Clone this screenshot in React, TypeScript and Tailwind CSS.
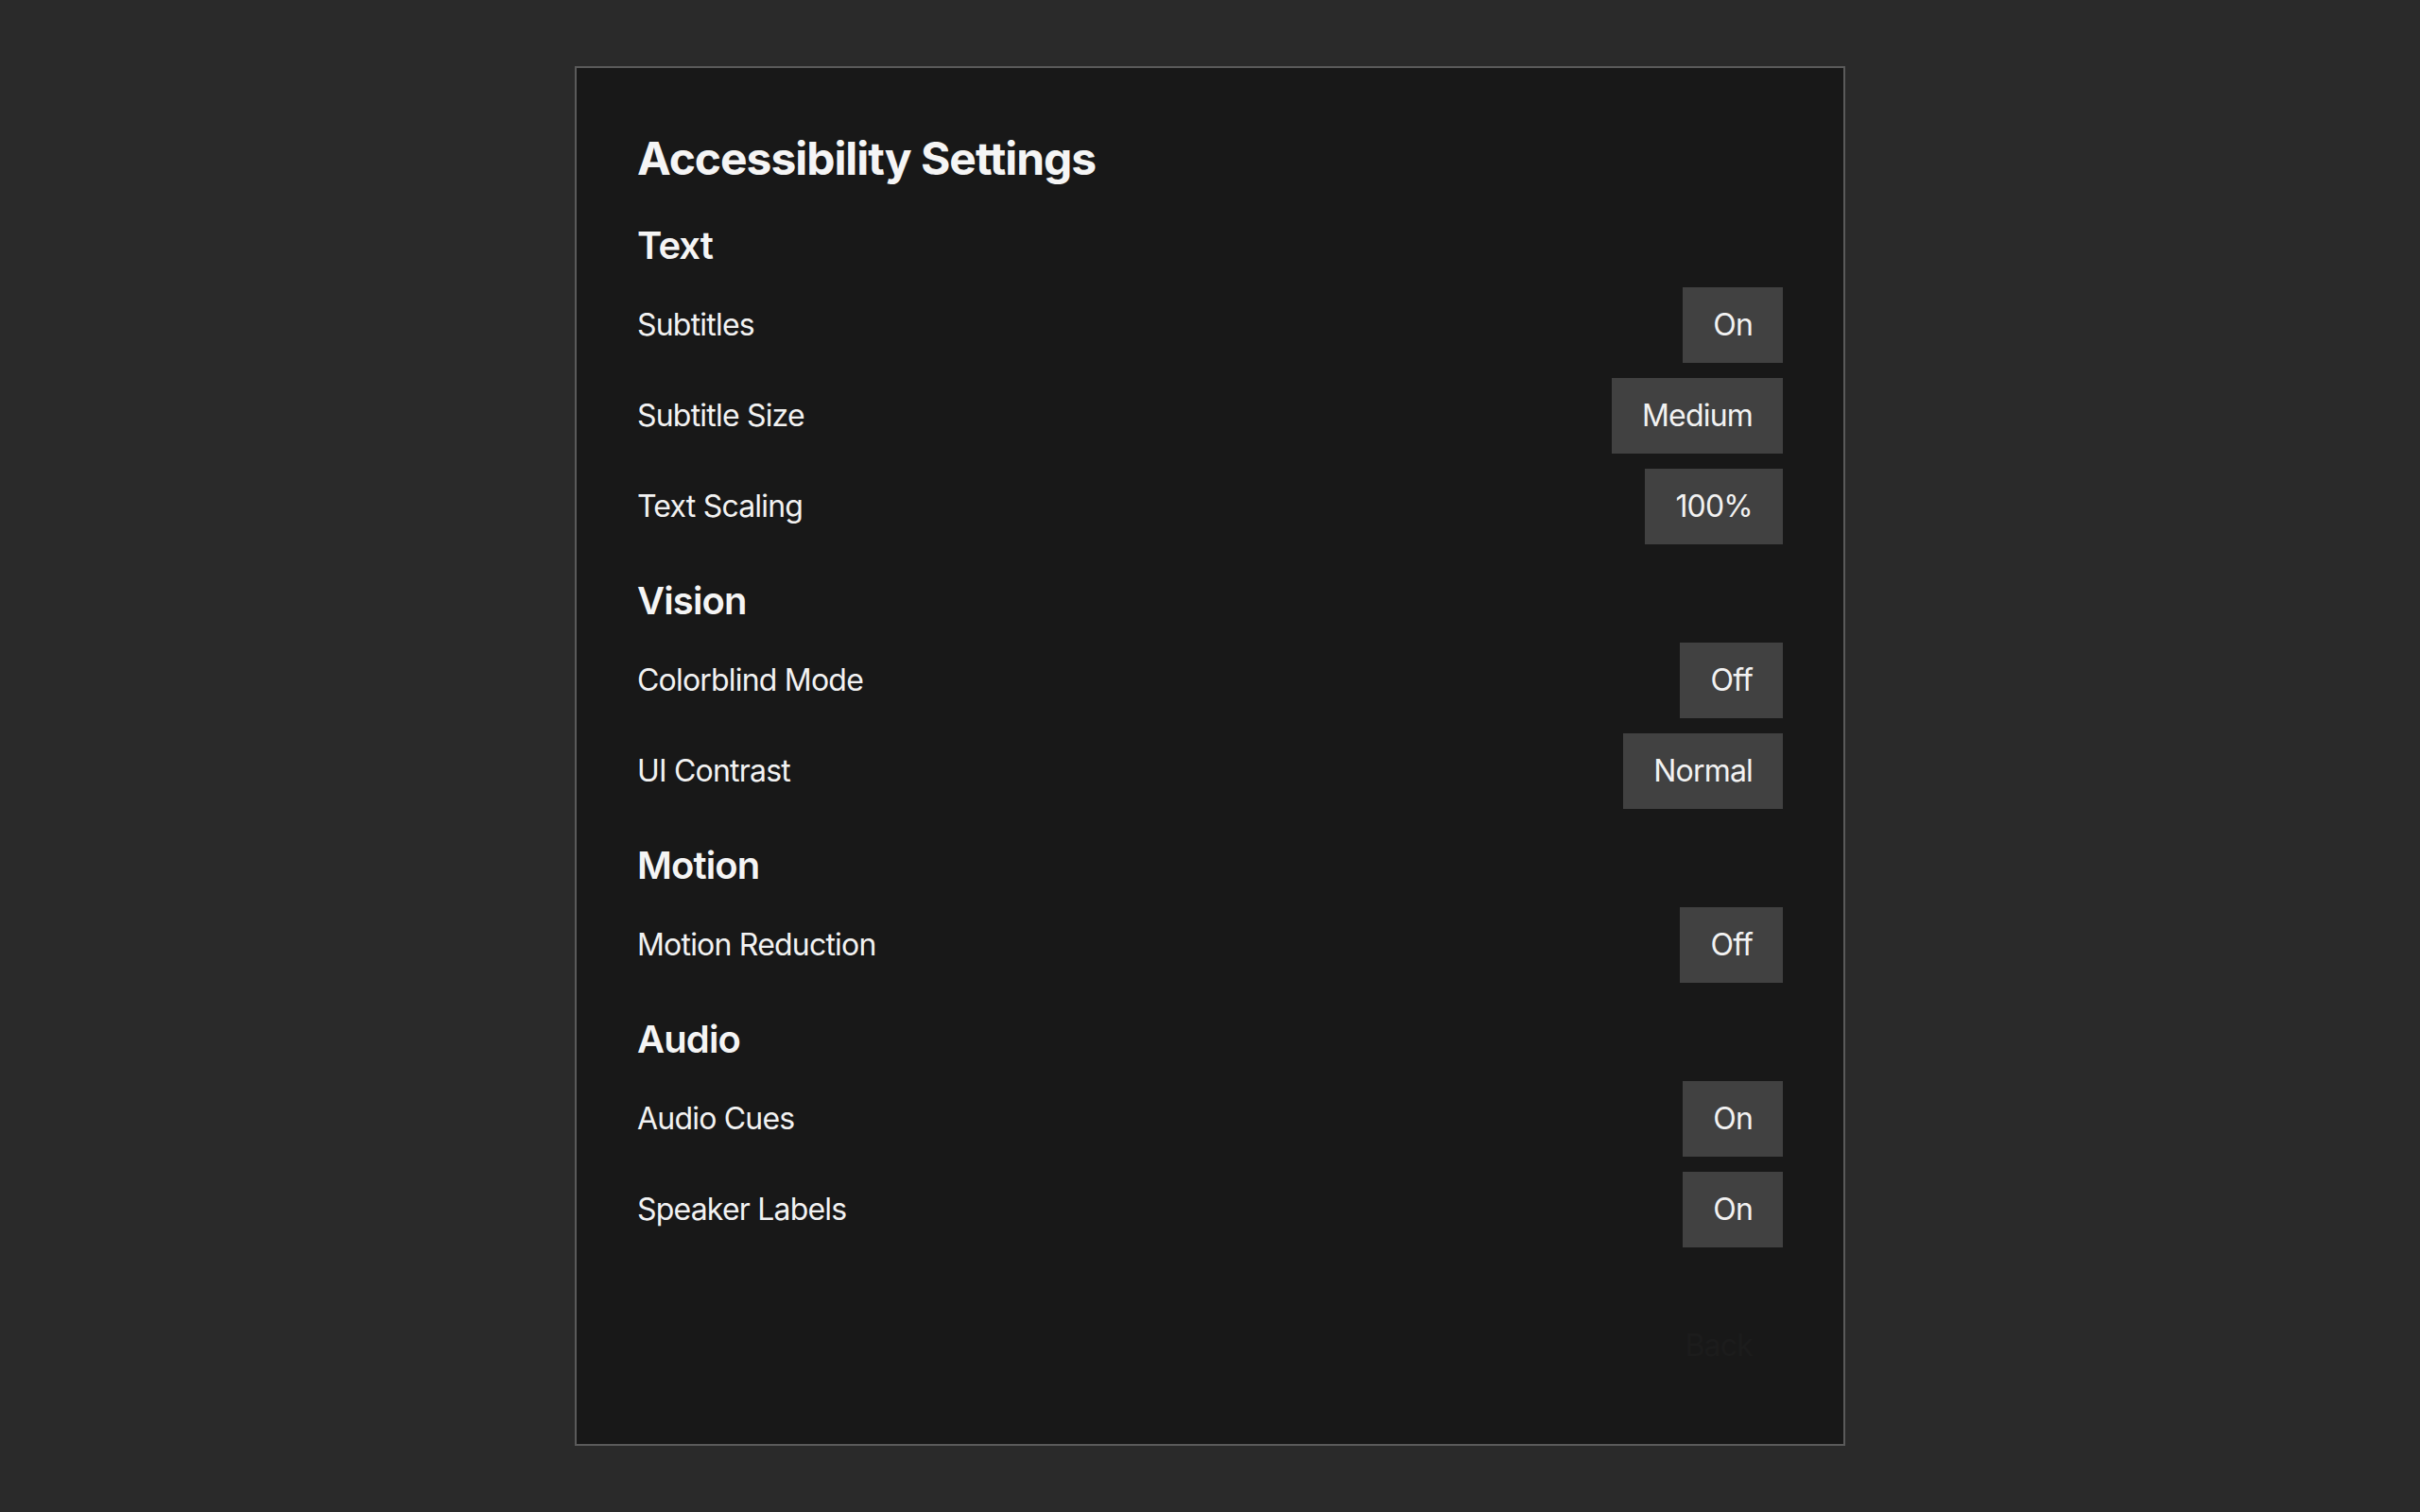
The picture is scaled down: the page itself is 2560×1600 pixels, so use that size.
import React from 'react'

type Setting = {
  label: string
  value: string
}

type Section = {
  title: string
  settings: Setting[]
}

const sections: Section[] = [
  {
    title: 'Text',
    settings: [
      { label: 'Subtitles', value: 'On' },
      { label: 'Subtitle Size', value: 'Medium' },
      { label: 'Text Scaling', value: '100%' },
    ],
  },
  {
    title: 'Vision',
    settings: [
      { label: 'Colorblind Mode', value: 'Off' },
      { label: 'UI Contrast', value: 'Normal' },
    ],
  },
  {
    title: 'Motion',
    settings: [{ label: 'Motion Reduction', value: 'Off' }],
  },
  {
    title: 'Audio',
    settings: [
      { label: 'Audio Cues', value: 'On' },
      { label: 'Speaker Labels', value: 'On' },
    ],
  },
]

function SettingRow({ label, value }: Setting) {
  return (
    <div className="flex items-center justify-between">
      <span className="text-[32px] leading-[48px] tracking-[-0.025em] text-[#f2f2f2]">{label}</span>
      <button className="bg-[#414141] px-[32px] py-[16px] text-[32px] leading-[48px] tracking-[-0.025em] text-[#f2f2f2]">
        {value}
      </button>
    </div>
  )
}

export default function App() {
  return (
    <div
      className="min-h-screen bg-[#2a2a2a] pt-[70px]"
      style={{ fontFamily: 'Inter, "Noto Sans", "Liberation Sans", sans-serif' }}
    >
      <div className="mx-auto flex h-[1460px] w-[1344px] flex-col border-2 border-[#5a5a5a] bg-[#181818] p-[64px]">
        <h1 className="text-[48px] font-bold leading-[64px] tracking-[-0.022em] text-[#f5f5f5]">
          Accessibility Settings
        </h1>

        {sections.map((section) => (
          <div key={section.title} className="mt-[32px]">
            {/* Cabecera de la sección */}
            <h2 className="mb-[16px] text-[40px] font-semibold leading-[56px] tracking-[-0.022em] text-[#f5f5f5]">
              {section.title}
            </h2>
            <div className="flex flex-col gap-[16px]">
              {section.settings.map((s) => (
                <SettingRow key={s.label} label={s.label} value={s.value} />
              ))}
            </div>
          </div>
        ))}

        <div className="mt-auto flex justify-end">
          <button className="px-[32px] py-[16px] text-[32px] leading-[48px] tracking-[-0.025em] text-[#1c1c1c]">
            Back
          </button>
        </div>
      </div>
    </div>
  )
}
